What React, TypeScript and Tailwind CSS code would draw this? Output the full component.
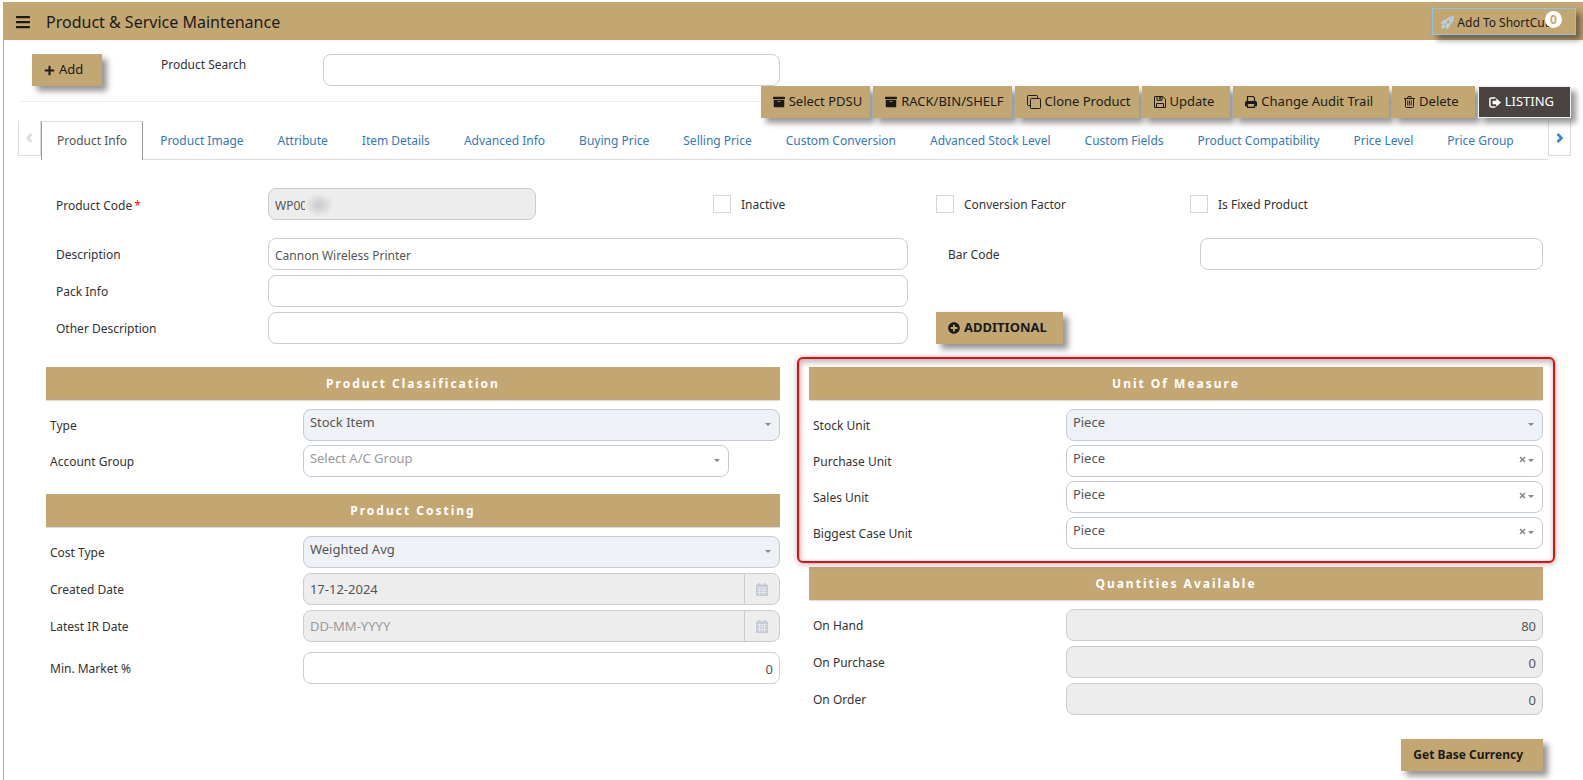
import type { ReactNode } from "react";
import { FaArchive, FaBars, FaPlus, FaPlusCircle } from "react-icons/fa";

const tabs = [
  "Product Info", "Product Image", "Attribute", "Item Details", "Advanced Info", "Buying Price", "Selling Price",
  "Custom Conversion", "Advanced Stock Level", "Custom Fields", "Product Compatibility", "Price Level", "Price Group",
];

const box = "h-8 w-full rounded-lg border px-1.5 pt-0.5 text-[#555] outline-none";
const plain = box + " border-[#ccc] bg-white";
const locked = box + " border-[#ccc] bg-[#ededed]";

const CloneIcon = () => (
  <svg width="14" height="14" viewBox="0 0 14 14" fill="none" stroke="currentColor">
    <rect x="3.5" y="3.5" width="10" height="10" rx="0.8" />
    <path d="M3 10.5H1.3a.8.8 0 0 1-.8-.8V1.3a.8.8 0 0 1 .8-.8h8.4a.8.8 0 0 1 .8.8V3" />
  </svg>
);

const SaveIcon = () => (
  <svg width="12" height="12" viewBox="0 0 12 12" fill="none" stroke="currentColor">
    <path d="M.5 1a.5.5 0 0 1 .5-.5h7.8L11.5 3.2V11a.5.5 0 0 1-.5.5H1a.5.5 0 0 1-.5-.5z" />
    <path d="M2.5 11.5v-4h7v4M3 .5v3.8h5V.5" />
    <path d="M5.2 1h1.6v2.4H5.2z" fill="currentColor" stroke="none" />
  </svg>
);

const PrintIcon = () => (
  <svg width="12" height="12" viewBox="0 0 12 12" fill="none" stroke="currentColor">
    <path d="M2.5 5.5v-5h5.6l1.4 1.4v3.6" strokeWidth="1.2" />
    <path d="M0 6.6A1.6 1.6 0 0 1 1.6 5h8.8A1.6 1.6 0 0 1 12 6.6v3.6h-2V8H2v2.2H0z" fill="currentColor" stroke="none" />
    <path d="M2.5 8.2v3.2h7V8.2" strokeWidth="1.2" />
  </svg>
);

const TrashIcon = () => (
  <svg width="11" height="12" viewBox="0 0 11 12" fill="none" stroke="currentColor">
    <path d="M0 2.6h11M3.4 2.4l.6-1.8h3l.6 1.8M1.5 3v7.6c0 .5.4.9.9.9h6.2c.5 0 .9-.4.9-.9V3" />
    <path d="M3.7 4.5v5M5.5 4.5v5M7.3 4.5v5" strokeWidth="0.9" />
  </svg>
);

const SignOutIcon = () => (
  <svg width="12" height="11" viewBox="0 0 12 11" fill="none" stroke="currentColor">
    <path d="M6.5 1H2.3C1.5 1 .9 1.6.9 2.4v6.2c0 .8.6 1.4 1.4 1.4h4.2" strokeWidth="1.5" />
    <path d="M3.6 3.8h3.6V1.2L12 5.5 7.2 9.8V7.2H3.6z" fill="currentColor" stroke="none" />
  </svg>
);

const RocketIcon = () => (
  <svg width="13" height="13" viewBox="0 0 14 14" fill="none" stroke="#b5d3ee" strokeWidth="1.6">
    <path d="M4.6 7.2C6 3.4 8.6 1 13 1c0 4.4-2.4 7-6.2 8.4z" />
    <path d="M5.4 5H3L1.2 7.6l3.2-.2M9 8.6V11l-2.6 1.8.2-3.2" />
    <path d="M3.6 9.4c-1.4.2-2 1.4-2.2 3.2 1.8-.2 3-.8 3.2-2.2" />
    <circle cx="9.8" cy="4.2" r="0.8" />
  </svg>
);

const CalendarIcon = () => (
  <svg width="12" height="13" viewBox="0 0 12 13" fill="currentColor">
    <path d="M2 1.4C2 .6 2.4 0 3.1 0s1.2.6 1.2 1.4h3.4C7.7.6 8.2 0 8.9 0S10 .6 10 1.4h1.2c.5 0 .8.3.8.8v10c0 .5-.3.8-.8.8H.8c-.5 0-.8-.3-.8-.8v-10c0-.5.3-.8.8-.8z" />
    <path d="M1 4.3h10M1 6.8h10M1 9.4h10M3.5 4.3v7.700M6 4.300v7.700M8.500 4.300v7.700" stroke="#ededed" strokeWidth="0.8" />
  </svg>
);

function GoldButton({ icon, children, className = "pr-4 text-[13px]" }: { icon?: ReactNode; children: ReactNode; className?: string }) {
  return (
    <button type="button" className={"flex h-8 items-center gap-1 bg-[#c3a772] pl-3 whitespace-nowrap text-[#1b1b1b] shadow-[5px_5px_6px_rgba(0,0,0,0.42)] " + className}>
      {icon}
      {children}
    </button>
  );
}

function Heading({ children }: { children: ReactNode }) {
  return <h2 className="flex h-[34px] items-center justify-center border-b border-[#ddd] bg-[#c3a772] text-xs font-bold tracking-[2px] text-white">{children}</h2>;
}

function Row({ id, label, children }: { id: string; label: string; children: ReactNode }) {
  return (
    <div className="flex">
      <label htmlFor={id} className="w-[35%] shrink-0 pt-[7px] pl-1 text-xs leading-5">{label}</label>
      <div className="flex-1 text-[13px]">{children}</div>
    </div>
  );
}

function Picker({ id, value, disabled, clearable, muted }: { id: string; value: string; disabled?: boolean; clearable?: boolean; muted?: boolean }) {
  return (
    <div className="relative">
      <select
        id={id}
        disabled={disabled}
        className={"h-8 w-full appearance-none rounded-lg border border-[#c2cad8] px-1.5 pb-1 outline-none disabled:opacity-100 " + (disabled ? "bg-[#eef1f5] " : "bg-white ") + (muted ? "text-[#999]" : "text-[#555]")}
      >
        <option>{value}</option>
      </select>
      {clearable && (
        <button type="button" aria-label="Clear" className="absolute top-[11px] right-[17px]">
          <svg width="7" height="7" viewBox="0 0 7 7" stroke="#888" strokeWidth="1.6"><path d="M1 1l5 5M6 1L1 6" /></svg>
        </button>
      )}
      <svg className="pointer-events-none absolute top-[14px] right-[9px]" width="6" height="3" viewBox="0 0 6 3" fill="#888"><path d="M0 0h6L3 3z" /></svg>
    </div>
  );
}

function DateBox({ id, value }: { id: string; value?: string }) {
  return (
    <div className="flex">
      <input id={id} disabled defaultValue={value} placeholder="DD-MM-YYYY" className="h-8 min-w-0 flex-1 rounded-l-lg border border-[#ccc] bg-[#ededed] px-1.5 text-[#555] placeholder:text-[#999]" />
      <button type="button" disabled aria-label="Open calendar" className="-ml-px flex w-9 items-center justify-center rounded-r-lg border border-[#ccc] bg-[#ededed] text-[#c2cad8]">
        <CalendarIcon />
      </button>
    </div>
  );
}

function Check({ label }: { label: string }) {
  return (
    <label className="flex items-center gap-2.5 text-xs">
      <input type="checkbox" className="size-[18px] appearance-none border border-[#d6d6d6] bg-white" />
      <span className="pt-0.5">{label}</span>
    </label>
  );
}

export default function App() {
  return (
    <div className="ml-[3px] pt-0.5 font-['Noto_Sans','Open_Sans',sans-serif] text-[#333]">
      <div className="min-h-[calc(100vh-2px)] border-l border-[#c3a772]">
        <header className="flex h-[38px] items-center bg-[#c3a772] pr-[7px] pl-[11px] text-[#1b1b1b]">
          <button type="button" aria-label="Menu" className="pt-0.5"><FaBars size={16} /></button>
          <h1 className="ml-[15px] flex-1 pt-0.5 text-base">Product &amp; Service Maintenance</h1>
          <button type="button" className="relative mt-px flex h-[27px] items-center gap-[3px] border border-[#8fc1ea] pt-0.5 pr-[26px] pl-2 text-xs shadow-[5px_5px_6px_rgba(0,0,0,0.42)]">
            <RocketIcon />
            Add To ShortCut
            <span className="absolute top-0.5 right-[13px] flex size-[17px] items-center justify-center rounded-full bg-white text-xs font-bold text-[#c3a772]">0</span>
          </button>
        </header>

        <div className="pr-3 pl-[14px]">
          <div className="flex h-[62px] border-b border-[#eee] pt-[14px] pl-[14px]">
            <GoldButton icon={<FaPlus size={11} />} className="w-[70px] text-[13px]">Add</GoldButton>
            <label htmlFor="search" className="ml-[59px] w-[162px] pt-px text-xs leading-5">Product Search</label>
            <input id="search" className={plain + " max-w-[457px] text-xs"} />
          </div>
          <div className="relative -mt-4 flex justify-end gap-[3px]">
            <GoldButton icon={<FaArchive size={12} />} className="pr-2 text-[13px]">Select PDSU</GoldButton>
            <GoldButton icon={<FaArchive size={12} />} className="pr-2 text-[13px]">RACK/BIN/SHELF</GoldButton>
            <GoldButton icon={<CloneIcon />} className="pr-2 text-[13px]">Clone Product</GoldButton>
            <GoldButton icon={<SaveIcon />}>Update</GoldButton>
            <GoldButton icon={<PrintIcon />}>Change Audit Trail</GoldButton>
            <GoldButton icon={<TrashIcon />}>Delete</GoldButton>
            <button type="button" className="flex h-8 items-center gap-1 border border-[#eee] bg-[#4a4342] pr-4 pl-2.5 text-[13px] text-white shadow-[5px_5px_6px_rgba(0,0,0,0.42)]">
              <SignOutIcon />
              LISTING
            </button>
          </div>

          <nav className="mt-[3px] flex items-start">
            <button type="button" aria-label="Previous tabs" className="flex h-[35px] w-[23px] shrink-0 items-center justify-center border border-t-0 border-[#ddd] text-[#ddd]">
              <svg width="8" height="10" viewBox="0 0 8 10" fill="none" stroke="currentColor" strokeWidth="2.6"><path d="M5.5 1l-4 4 4 4" /></svg>
            </button>
            <div className="flex h-[39px] min-w-0 flex-1 border-b border-[#ddd]">
              {tabs.map((t, i) => (
                <a key={t} href="#" className={"flex h-[39px] items-center border-x text-xs whitespace-nowrap " + (i === 0 ? "border-t border-x-[#999] border-t-[#ddd] bg-white px-[15px] text-[#555]" : "border-transparent px-4 text-[#337ab7]")}>{t}</a>
              ))}
            </div>
            <button type="button" aria-label="Next tabs" className="flex h-[35px] w-[23px] shrink-0 items-center justify-center border border-t-0 border-[#ddd] text-[#3b86cb]">
              <svg width="8" height="10" viewBox="0 0 8 10" fill="none" stroke="currentColor" strokeWidth="2.6"><path d="M1.5 1l4 4-4 4" /></svg>
            </button>
          </nav>
        </div>

        <form className="pr-10 pb-2 pl-[42px]">
          <div className="mt-7 grid grid-cols-[212px_445fr_223fr_254fr_353fr] items-center pl-2.5">
            <label htmlFor="code" className="pt-1 text-xs">Product Code<span className="ml-0.5 text-[#e02222]">*</span></label>
            <div className="relative w-[268px]">
              <input id="code" readOnly defaultValue="WP00" className={locked + " text-xs"} />
              <span className="absolute top-1.5 left-[37px] h-[22px] w-8 overflow-hidden bg-[#ededed]">
                <span className="block h-full w-7 bg-[radial-gradient(ellipse_at_center,#c8c8c8,#ededed_75%)]" />
              </span>
            </div>
            <Check label="Inactive" />
            <Check label="Conversion Factor" />
            <Check label="Is Fixed Product" />
          </div>

          <div className="mt-[18px] grid grid-cols-[212px_640fr_292px_343fr] items-center gap-y-[5px] pl-2.5 text-xs">
            <label htmlFor="desc" className="pt-0.5">Description</label>
            <input id="desc" defaultValue="Cannon Wireless Printer" className={plain} />
            <label htmlFor="barcode" className="pt-0.5 pl-10">Bar Code</label>
            <input id="barcode" className={plain} />
            <label htmlFor="pack" className="pt-0.5">Pack Info</label>
            <input id="pack" className={plain} />
            <span className="col-span-2" />
            <label htmlFor="other" className="pt-0.5">Other Description</label>
            <input id="other" className={plain} />
            <div className="pl-7"><GoldButton icon={<FaPlusCircle size={12} />} className="w-fit pr-4 text-[13px] font-bold">ADDITIONAL</GoldButton></div>
          </div>

          <div className="mt-[23px] grid grid-cols-2 gap-[29px]">
            <div>
              <Heading>Product Classification</Heading>
              <div className="mt-2 flex flex-col gap-1">
                <Row id="type" label="Type"><Picker id="type" value="Stock Item" disabled /></Row>
                <Row id="group" label="Account Group"><div className="pr-[51px]"><Picker id="group" value="Select A/C Group" muted /></div></Row>
              </div>
              <div className="mt-[17px]"><Heading>Product Costing</Heading></div>
              <div className="mt-2 flex flex-col gap-[5px]">
                <Row id="cost" label="Cost Type"><Picker id="cost" value="Weighted Avg" disabled /></Row>
                <Row id="created" label="Created Date"><DateBox id="created" value="17-12-2024" /></Row>
                <Row id="latest" label="Latest IR Date"><DateBox id="latest" /></Row>
              </div>
              <div className="mt-2.5">
                <Row id="market" label="Min. Market %"><input id="market" defaultValue="0" className={plain + " text-right"} /></Row>
              </div>
            </div>

            <div>
              <section className="relative">
                <div className="pointer-events-none absolute -inset-x-3 -top-2.5 -bottom-3.5 rounded-md border-2 border-[#f00] shadow-[0_1px_6px_rgba(0,0,0,0.3),inset_1px_3px_6px_rgba(0,0,0,0.3)]" />
                <Heading>Unit Of Measure</Heading>
                <div className="mt-2 flex flex-col gap-1">
                  <Row id="stock" label="Stock Unit"><Picker id="stock" value="Piece" disabled /></Row>
                  <Row id="purchase" label="Purchase Unit"><Picker id="purchase" value="Piece" clearable /></Row>
                  <Row id="sales" label="Sales Unit"><Picker id="sales" value="Piece" clearable /></Row>
                  <Row id="biggest" label="Biggest Case Unit"><Picker id="biggest" value="Piece" clearable /></Row>
                </div>
              </section>
              <div className="mt-[18px]"><Heading>Quantities Available</Heading></div>
              <div className="mt-2 flex flex-col gap-[5px]">
                <Row id="hand" label="On Hand"><input id="hand" readOnly defaultValue="80" className={locked + " text-right"} /></Row>
                <Row id="onpurchase" label="On Purchase"><input id="onpurchase" readOnly defaultValue="0" className={locked + " text-right"} /></Row>
                <Row id="order" label="On Order"><input id="order" readOnly defaultValue="0" className={locked + " text-right"} /></Row>
              </div>
              <GoldButton className="mt-6 ml-auto pr-5 text-xs font-bold">Get Base Currency</GoldButton>
            </div>
          </div>
        </form>
      </div>
    </div>
  );
}
